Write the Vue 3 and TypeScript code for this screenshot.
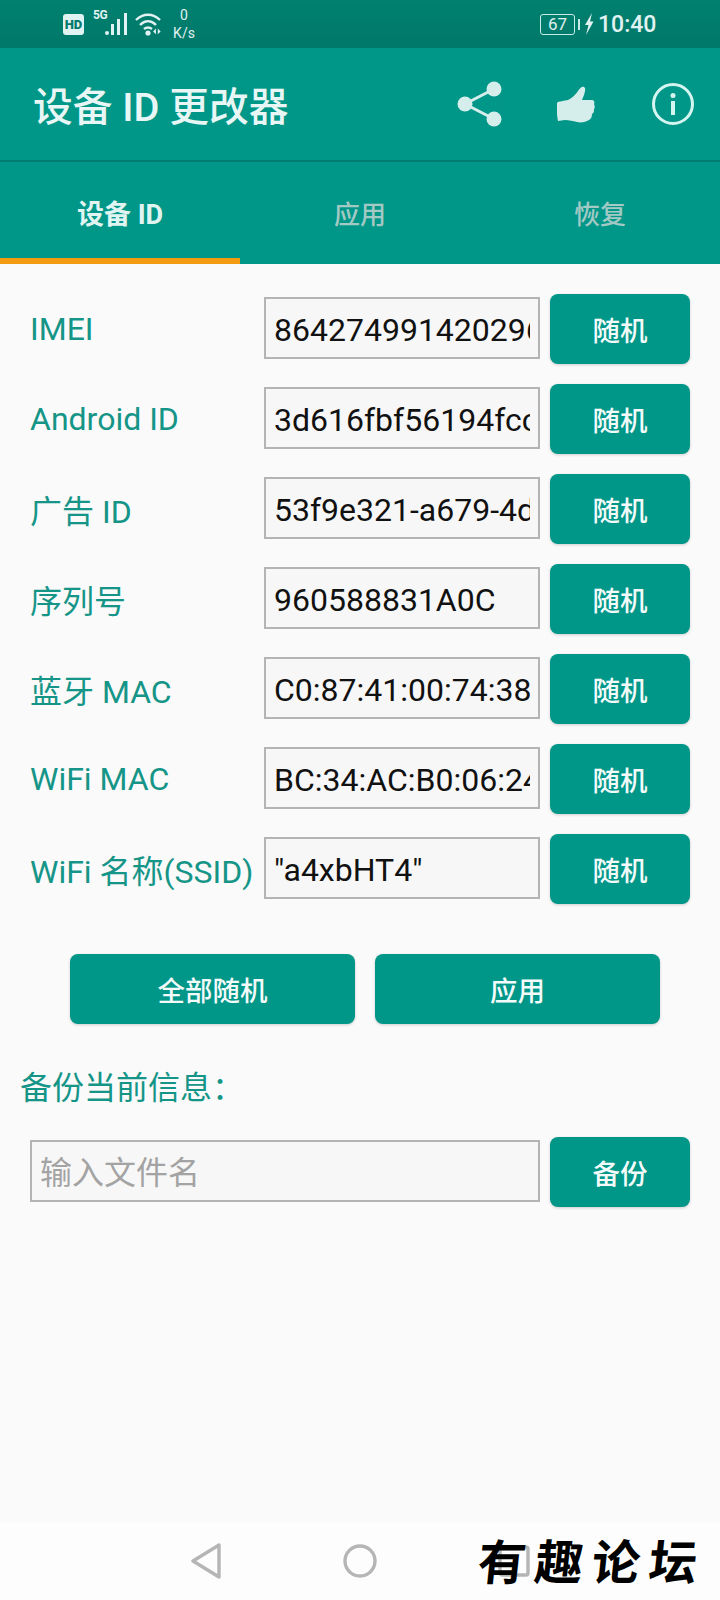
<script setup lang="ts">
interface Field {
  label: string;
  value: string;
}

const fields: Field[] = [
  { label: 'IMEI', value: '864274991420296' },
  { label: 'Android ID', value: '3d616fbf56194fcc' },
  { label: '广告 ID', value: '53f9e321-a679-4dc8-9f10' },
  { label: '序列号', value: '960588831A0C' },
  { label: '蓝牙 MAC', value: 'C0:87:41:00:74:38' },
  { label: 'WiFi MAC', value: 'BC:34:AC:B0:06:24' },
  { label: 'WiFi 名称(SSID)', value: '"a4xbHT4"' },
];

const tabs = ['设备 ID', '应用', '恢复'];
</script>

<template>
  <div class="phone">
    <div class="status">
      <span class="hd">HD</span>
      <span class="five-g">5G</span>
      <svg class="signal" width="23" height="22" viewBox="0 0 23 22">
        <circle cx="2" cy="20" r="2" fill="#e0f2f1" />
        <rect x="6" y="11" width="3" height="11" fill="#e0f2f1" />
        <rect x="12" y="6" width="3" height="16" fill="#e0f2f1" />
        <rect x="19" y="0" width="3" height="22" fill="#e0f2f1" />
      </svg>
      <svg class="wifi" width="27" height="23" viewBox="0 0 27 23" fill="none" stroke="#e0f2f1" stroke-width="2.4">
        <path d="M1 7 C8 0 18 0 25 7" />
        <path d="M5 12 C10 7 16 7 21 12" />
        <path d="M9 16 C11.500 14 14.500 14 17 16" />
        <circle cx="13" cy="20" r="2.600" fill="#e0f2f1" stroke="none" />
        <path d="M19 21 l3-3 v6 z M27 21 l-3-3 v6 z" fill="#e0f2f1" stroke="none" transform="translate(0 -1.500) scale(0.95)" />
      </svg>
      <div class="speed">
        <span>0</span>
        <span>K/s</span>
      </div>
      <div class="status-right">
        <span class="battery">67</span>
        <span class="nub"></span>
        <svg class="bolt" width="10" height="22" viewBox="0 0 10 22">
          <path d="M8 0 L1 12 H4.500 L2 22 L9.500 8.500 H6 Z" fill="#e0f2f1" />
        </svg>
        <span class="time">10:40</span>
      </div>
    </div>

    <header class="appbar">
      <h1>设备 ID 更改器</h1>
      <svg class="share" width="46" height="46" viewBox="0 0 46 46">
        <path d="M37 8 L8 23 L37 38" fill="none" stroke="#d5eeeb" stroke-width="3" />
        <circle cx="37" cy="8" r="7.500" fill="#d5eeeb" />
        <circle cx="8" cy="23" r="7.500" fill="#d5eeeb" />
        <circle cx="37" cy="38" r="7.500" fill="#d5eeeb" />
      </svg>
      <svg class="thumb" width="38" height="37" viewBox="0 0 38 37">
        <path
          d="M0 17 C1 15 8 15 11 14 C15 12 19 8 21 5 C23 2 25 0 27 1 C29 2 28 6 27 9 L25 14 H35 C37 14 38 16 37 18 C38 20 38 22 37 23 C37 25 37 27 35 28 C35 31 34 33 32 34 C29 36 24 37 20 36 C16 35 12 34 8 34 L1 35 C0 30 -1 22 0 17 Z"
          fill="#d5eeeb"
        />
      </svg>
      <svg class="info" width="44" height="44" viewBox="0 0 44 44">
        <circle cx="22" cy="22" r="19.500" fill="none" stroke="#d5f5f0" stroke-width="3" />
        <circle cx="22" cy="13.500" r="2.500" fill="#d5f5f0" />
        <rect x="20" y="19" width="4" height="14" fill="#d5f5f0" />
      </svg>
    </header>

    <nav class="tabs">
      <div v-for="(tab, i) in tabs" :key="tab" class="tab" :class="{ active: i === 0 }">{{ tab }}</div>
    </nav>

    <main class="content">
      <div v-for="f in fields" :key="f.label" class="row">
        <label class="label">{{ f.label }}</label>
        <input class="field" :value="f.value" readonly />
        <button class="btn small">随机</button>
      </div>

      <div class="actions">
        <button class="btn wide">全部随机</button>
        <button class="btn wide">应用</button>
      </div>

      <div class="backup-title">备份当前信息：</div>

      <div class="backup-row">
        <input class="field grow" placeholder="输入文件名" />
        <button class="btn small">备份</button>
      </div>
    </main>

    <footer class="navbar">
      <svg width="32" height="36" viewBox="0 0 32 36" fill="none" stroke="#b5b5b5" stroke-width="3.400" stroke-linejoin="round">
        <path d="M29 2 V34 L3 18 Z" />
      </svg>
      <svg width="36" height="36" viewBox="0 0 36 36" fill="none" stroke="#b5b5b5" stroke-width="3.400">
        <circle cx="18" cy="18" r="15" />
      </svg>
      <svg width="32" height="32" viewBox="0 0 32 32" fill="none" stroke="#b5b5b5" stroke-width="3.400" stroke-linejoin="round">
        <rect x="2" y="2" width="28" height="28" rx="2" />
      </svg>
      <div class="watermark">有趣论坛</div>
    </footer>
  </div>
</template>

<style scoped>
.phone {
  width: 720px;
  height: 1600px;
  display: flex;
  flex-direction: column;
  background: #fafafa;
  font-family: Roboto, "Noto Sans CJK SC", sans-serif;
  overflow: hidden;
}

.status {
  height: 48px;
  flex: none;
  display: flex;
  align-items: center;
  padding-left: 63px;
  background: linear-gradient(#00806f, #00786a);
  color: #e0f2f1;
}

.hd {
  width: 21px;
  height: 21px;
  border-radius: 3px;
  background: #e0f2f1;
  color: #00796b;
  font-size: 13px;
  font-weight: 900;
  line-height: 21px;
  text-align: center;
}

.five-g {
  width: 12px;
  margin: -18px 0 0 9px;
  font-size: 12px;
  font-weight: 700;
  letter-spacing: -0.5px;
}

.signal {
  margin: 0 0 1px 0;
}

.wifi {
  margin-left: 7px;
}

.speed {
  display: flex;
  flex-direction: column;
  align-items: center;
  width: 26px;
  margin-left: 9px;
  font-size: 14px;
  line-height: 18px;
}

.status-right {
  display: flex;
  align-items: center;
  margin-left: 343px;
}

.battery {
  box-sizing: border-box;
  width: 35px;
  height: 21px;
  border: 1.500px solid #c8ebe6;
  border-radius: 3px;
  font-size: 17px;
  line-height: 18px;
  text-align: center;
}

.nub {
  width: 2px;
  height: 11px;
  margin-left: 3px;
  background: #c8ebe6;
}

.bolt {
  margin-left: 4px;
}

.time {
  margin-left: 4px;
  font-size: 23px;
  font-weight: 500;
}

.appbar {
  height: 112px;
  flex: none;
  display: flex;
  align-items: center;
  padding-left: 33px;
  background: #009688;
  border-bottom: 2px solid #007d70;
}

.appbar h1 {
  margin: -2px 0 0 0;
  width: 424px;
  color: #e8f7f5;
  font-size: 39.700px;
  font-weight: 500;
  white-space: nowrap;
}

.share {
  flex: none;
}

.thumb {
  flex: none;
  margin-left: 54px;
}

.info {
  flex: none;
  margin-left: 56px;
}

.tabs {
  height: 102px;
  flex: none;
  display: flex;
  background: #009688;
}

.tab {
  flex: 1;
  display: flex;
  align-items: center;
  justify-content: center;
  padding-bottom: 2px;
  color: #a3c9c4;
  font-size: 26px;
  font-weight: 500;
}

.tab.active {
  color: #e0f5f2;
  font-size: 27px;
  font-weight: 700;
  border-bottom: 6px solid #f39c12;
  padding: 4px 0 0;
}

.content {
  flex: 1;
  padding-top: 30px;
}

.row {
  display: flex;
  align-items: center;
  height: 70px;
  margin-bottom: 20px;
  padding-left: 30px;
}

.label {
  width: 234px;
  flex: none;
  color: #159587;
  font-size: 32px;
  white-space: nowrap;
}

.field {
  box-sizing: border-box;
  width: 276px;
  height: 62px;
  flex: none;
  margin-bottom: 2px;
  padding: 3px 8px 0 8px;
  border: 2px solid #b4b4b4;
  border-radius: 0;
  outline: none;
  background: #f7f7f7;
  color: #111;
  font-family: inherit;
  font-size: 32px;
}

.field.grow {
  width: 510px;
}

.field::placeholder {
  color: #a3a3a3;
}

.btn {
  border: 0;
  border-radius: 8px;
  background: #009688;
  color: #f2fbfa;
  font-family: inherit;
  font-size: 27.500px;
  font-weight: 500;
  box-shadow: 0 1px 3px rgba(0, 0, 0, 0.18);
}

.btn.small {
  width: 140px;
  height: 70px;
  flex: none;
  margin-left: 10px;
}

.btn.wide {
  width: 285px;
  height: 70px;
}

.actions {
  display: flex;
  gap: 20px;
  margin: 50px 0 0 70px;
}

.backup-title {
  margin: 42px 0 0 20px;
  color: #159587;
  font-size: 32px;
  line-height: 44px;
}

.backup-row {
  display: flex;
  align-items: center;
  margin: 27px 0 0 30px;
}

.navbar {
  position: relative;
  height: 78px;
  flex: none;
  display: flex;
  align-items: center;
  background: #fdfdfd;
  padding-left: 190px;
  gap: 120px;
}

.watermark {
  position: absolute;
  left: 478px;
  top: 14px;
  color: #000;
  font-size: 48px;
  font-weight: 700;
  line-height: 56px;
  letter-spacing: 9px;
  transform: skewX(-6deg);
  white-space: nowrap;
}
</style>
